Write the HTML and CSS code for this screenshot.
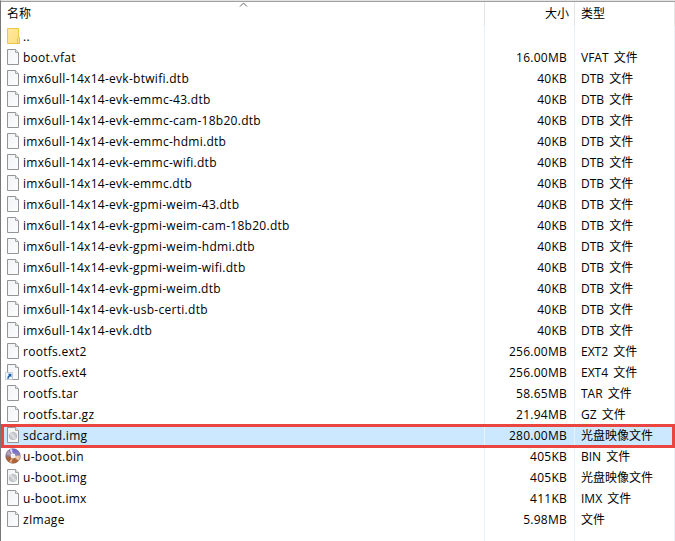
FILE: index.html
```html
<!DOCTYPE html>
<html lang="zh-CN">
<head>
<meta charset="utf-8">
<title>文件列表</title>
<link rel="stylesheet" href="styles.css">
</head>
<body>
<svg class="defs" aria-hidden="true">
  <defs>
    <linearGradient id="gold" x2="1" y2="1"><stop offset="0" stop-color="#ffeaa1"/><stop offset="1" stop-color="#fcdd79"/></linearGradient>
    <linearGradient id="paper" x2="1" y2="1"><stop offset="0" stop-color="#f1f3f5"/><stop offset="1" stop-color="#fdfdfd"/></linearGradient>
    <linearGradient id="shine" x2="0" y2="1"><stop offset="0" stop-color="#6a64d8"/><stop offset=".45" stop-color="#8d84b4"/><stop offset=".6" stop-color="#a8643e"/><stop offset="1" stop-color="#b8622c"/></linearGradient>
    <symbol id="folder" viewBox="0 0 16 18">
      <path d="M2.5 1.5h11v9h1v6h-12z" fill="url(#gold)" stroke="#edc64d"/>
      <path d="M12.5 16.5v-5l1-1 1 1v5z" fill="#ffe28a" stroke="#e9bd3d" stroke-width=".8"/>
    </symbol>
    <symbol id="file" viewBox="0 0 16 18">
      <path d="M2.5 1.5h8l3 3v12h-11z" fill="url(#paper)" stroke="#929496"/>
      <path d="M10.5 1.5v3h3" fill="#e5e7e9" stroke="#a4a6a8"/>
    </symbol>
    <symbol id="link" viewBox="0 0 16 18">
      <use href="#file"/>
      <path d="M.5 9.5h7v7h-7z" fill="#f7fafd" stroke="#b9c4ce" stroke-width=".8"/>
      <path d="M2.8 10.8h3.6v3.6l-1.2-1.2q-1.6 1-1.5 2.5h-1.5q-.2-2.2 1.8-3.7z" fill="#1d5da8"/>
    </symbol>
    <symbol id="image" viewBox="0 0 16 18">
      <use href="#file"/>
      <circle cx="8" cy="10" r="3.8" fill="#c9ccce" stroke="#aeb1b4" stroke-width=".7"/>
      <path d="M8 10L4.6 8.4A3.8 3.8 0 0 1 7 6.3zM8 10l3.4 1.6A3.8 3.8 0 0 1 9 13.7z" fill="#dcdee0"/>
      <circle cx="8" cy="10" r="1.1" fill="#e2e4e5"/>
    </symbol>
    <symbol id="disc" viewBox="0 0 16 18">
      <circle cx="8" cy="9" r="7.5" fill="url(#shine)"/>
      <path d="M8 9L.8 7.2A7.5 7.5 0 0 1 3.4 3z" fill="#b5a3ae"/>
      <path d="M8 9L4.5 2.4A7.5 7.5 0 0 1 7 1.6z" fill="#e4e2fa"/>
      <path d="M8 9l7.4-.5A7.5 7.5 0 0 1 13.7 13.9z" fill="#eac8a8"/>
      <path d="M8 9L6.5 16.3A7.5 7.5 0 0 1 4 15.3z" fill="#e3ae83"/>
      <circle cx="8" cy="9" r="7.2" fill="none" stroke="#77647f" stroke-width=".6" opacity=".7"/>
      <circle cx="8" cy="9" r="2.4" fill="#f5f5f8"/>
      <circle cx="8" cy="9" r=".7" fill="#d4d2da"/>
    </symbol>
  </defs>
</svg>
<main class="panel">
  <header class="row head">
    <span class="name">名称</span><span class="size">大小</span><span class="type">类型</span>
    <svg class="sort" viewBox="0 0 9 6"><path d="M1 4.5l3.5-3.5L8 4.5" fill="none" stroke="#666"/></svg>
  </header>
  <div class="list">
    <div class="row"><span class="name"><svg class="icon"><use href="#folder"/></svg><span class="label">..</span></span><span class="size"></span><span class="type"></span></div>
    <div class="row"><span class="name"><svg class="icon"><use href="#file"/></svg><span class="label">boot.vfat</span></span><span class="size">16.00MB</span><span class="type">VFAT 文件</span></div>
    <div class="row"><span class="name"><svg class="icon"><use href="#file"/></svg><span class="label">imx6ull-14x14-evk-btwifi.dtb</span></span><span class="size">40KB</span><span class="type">DTB 文件</span></div>
    <div class="row"><span class="name"><svg class="icon"><use href="#file"/></svg><span class="label">imx6ull-14x14-evk-emmc-43.dtb</span></span><span class="size">40KB</span><span class="type">DTB 文件</span></div>
    <div class="row"><span class="name"><svg class="icon"><use href="#file"/></svg><span class="label">imx6ull-14x14-evk-emmc-cam-18b20.dtb</span></span><span class="size">40KB</span><span class="type">DTB 文件</span></div>
    <div class="row"><span class="name"><svg class="icon"><use href="#file"/></svg><span class="label">imx6ull-14x14-evk-emmc-hdmi.dtb</span></span><span class="size">40KB</span><span class="type">DTB 文件</span></div>
    <div class="row"><span class="name"><svg class="icon"><use href="#file"/></svg><span class="label">imx6ull-14x14-evk-emmc-wifi.dtb</span></span><span class="size">40KB</span><span class="type">DTB 文件</span></div>
    <div class="row"><span class="name"><svg class="icon"><use href="#file"/></svg><span class="label">imx6ull-14x14-evk-emmc.dtb</span></span><span class="size">40KB</span><span class="type">DTB 文件</span></div>
    <div class="row"><span class="name"><svg class="icon"><use href="#file"/></svg><span class="label">imx6ull-14x14-evk-gpmi-weim-43.dtb</span></span><span class="size">40KB</span><span class="type">DTB 文件</span></div>
    <div class="row"><span class="name"><svg class="icon"><use href="#file"/></svg><span class="label">imx6ull-14x14-evk-gpmi-weim-cam-18b20.dtb</span></span><span class="size">40KB</span><span class="type">DTB 文件</span></div>
    <div class="row"><span class="name"><svg class="icon"><use href="#file"/></svg><span class="label">imx6ull-14x14-evk-gpmi-weim-hdmi.dtb</span></span><span class="size">40KB</span><span class="type">DTB 文件</span></div>
    <div class="row"><span class="name"><svg class="icon"><use href="#file"/></svg><span class="label">imx6ull-14x14-evk-gpmi-weim-wifi.dtb</span></span><span class="size">40KB</span><span class="type">DTB 文件</span></div>
    <div class="row"><span class="name"><svg class="icon"><use href="#file"/></svg><span class="label">imx6ull-14x14-evk-gpmi-weim.dtb</span></span><span class="size">40KB</span><span class="type">DTB 文件</span></div>
    <div class="row"><span class="name"><svg class="icon"><use href="#file"/></svg><span class="label">imx6ull-14x14-evk-usb-certi.dtb</span></span><span class="size">40KB</span><span class="type">DTB 文件</span></div>
    <div class="row"><span class="name"><svg class="icon"><use href="#file"/></svg><span class="label">imx6ull-14x14-evk.dtb</span></span><span class="size">40KB</span><span class="type">DTB 文件</span></div>
    <div class="row"><span class="name"><svg class="icon"><use href="#file"/></svg><span class="label">rootfs.ext2</span></span><span class="size">256.00MB</span><span class="type">EXT2 文件</span></div>
    <div class="row"><span class="name"><svg class="icon"><use href="#link"/></svg><span class="label">rootfs.ext4</span></span><span class="size">256.00MB</span><span class="type">EXT4 文件</span></div>
    <div class="row"><span class="name"><svg class="icon"><use href="#file"/></svg><span class="label">rootfs.tar</span></span><span class="size">58.65MB</span><span class="type">TAR 文件</span></div>
    <div class="row"><span class="name"><svg class="icon"><use href="#file"/></svg><span class="label">rootfs.tar.gz</span></span><span class="size">21.94MB</span><span class="type">GZ 文件</span></div>
    <div class="row selected"><span class="name"><svg class="icon"><use href="#image"/></svg><span class="label">sdcard.img</span></span><span class="size">280.00MB</span><span class="type">光盘映像文件</span></div>
    <div class="row"><span class="name"><svg class="icon"><use href="#disc"/></svg><span class="label">u-boot.bin</span></span><span class="size">405KB</span><span class="type">BIN 文件</span></div>
    <div class="row"><span class="name"><svg class="icon"><use href="#image"/></svg><span class="label">u-boot.img</span></span><span class="size">405KB</span><span class="type">光盘映像文件</span></div>
    <div class="row"><span class="name"><svg class="icon"><use href="#file"/></svg><span class="label">u-boot.imx</span></span><span class="size">411KB</span><span class="type">IMX 文件</span></div>
    <div class="row"><span class="name"><svg class="icon"><use href="#file"/></svg><span class="label">zImage</span></span><span class="size">5.98MB</span><span class="type">文件</span></div>
    <div class="row rest"><span class="name"></span><span class="size"></span><span class="type"></span></div>
  </div>
</main>
</body>
</html>
```
FILE: styles.css
```css
* { box-sizing: border-box; }
body {
  margin: 0;
  background: #fff;
  color: #000;
  font: 12px/21px "Open Sans", "Noto Sans CJK SC", sans-serif;
}
.defs { position: absolute; width: 0; height: 0; }
.panel {
  display: flex;
  flex-direction: column;
  height: 541px;
  overflow: hidden;
  border-top: 1px solid #e3e3e3;
  border-left: 1px solid #777;
}
.list { flex: 1; display: flex; flex-direction: column; }
.row {
  display: grid;
  grid-template-columns: 484px 90px 100px;
  flex: none;
  height: 21px;
  position: relative;
  white-space: nowrap;
}
.row > span { border-right: 1px solid #e8f1fc; }
.name { display: flex; padding-left: 4px; letter-spacing: .28px; }
.icon { flex: none; width: 16px; height: 18px; margin-top: 1px; }
.label { margin-left: 2px; }
.size { padding-right: 7px; text-align: right; letter-spacing: .25px; }
.type { padding-left: 6px; word-spacing: 2px; }
.head {
  height: 25px;
  line-height: 24px;
  border-top: 1px solid #a0a0a0;
}
.head > span { border-color: #e5e5e5; }
.head .name { padding-left: 6px; letter-spacing: 0; }
.head .size { padding-right: 5px; letter-spacing: 0; }
.sort { position: absolute; left: 238px; top: 0; width: 9px; height: 6px; }
.selected { background: #cce8ff; }
.selected::after {
  content: "";
  position: absolute;
  inset: -1px 0 -2px;
  border: 3px solid #ea453e;
  z-index: 1;
}
.rest { flex: 1; height: auto; }
```
